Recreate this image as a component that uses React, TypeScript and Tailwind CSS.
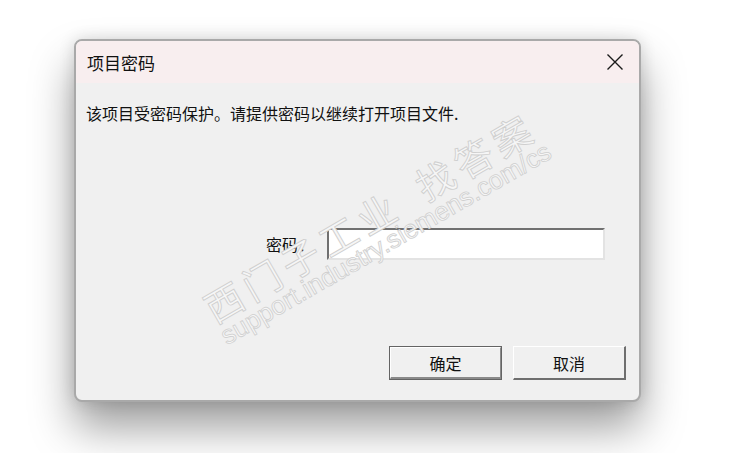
import React from "react";

const cjk = { fontFamily: '"Noto Sans CJK SC", "Noto Sans", sans-serif' };

export default function App() {
  return (
    <div className="w-[753px] h-[453px] bg-white overflow-hidden pl-[74px] pt-[39px]" style={cjk}>
      <div className="relative w-[567px] h-[363px] rounded-[8px] border-2 border-[#a9a9a9] bg-[#f0f0f0] shadow-[0_26px_44px_rgba(0,0,0,0.38),0_0_16px_rgba(0,0,0,0.14)] flex flex-col overflow-hidden">
        {/* title bar */}
        <div className="h-[42px] bg-[#f8eeef] flex items-center justify-between pl-[11px] pr-[15px] shrink-0">
          <span className="text-[17px] leading-none text-[#111]">项目密码</span>
          <svg width="18" height="18" viewBox="0 0 18 18" fill="none">
            <path d="M1.5 1.5 L16.5 16.5 M16.5 1.5 L1.5 16.5" stroke="#1a1a1a" strokeWidth="1.4" />
          </svg>
        </div>
        {/* body */}
        <div className="flex flex-col flex-1">
          <div className="pt-[20px] pl-[10px] text-[16px] leading-[20px] text-[#111]">
            该项目受密码保护。请提供密码以继续打开项目文件.
          </div>
          <div className="flex items-center mt-[105px] pl-[190px]">
            <span className="text-[16px] leading-[20px] text-[#111] w-[61px]">密码：</span>
            <div className="w-[278px] h-[32px] bg-white border-t-2 border-l-2 border-t-[#707070] border-l-[#707070] border-b-2 border-r-2 border-b-[#e3e3e3] border-r-[#e3e3e3]" />
          </div>
          <div className="flex justify-end gap-[11px] mt-[86px] pr-[13px]">
            <div className="w-[113px] h-[34px] border border-[#646464] flex">
              <div className="flex-1 border-t border-l border-t-white border-l-white border-b-2 border-r border-b-[#8a8a8a] border-r-[#8a8a8a] bg-[#f0f0f0] flex items-center justify-center text-[16px] text-[#111]">
                确定
              </div>
            </div>
            <div className="w-[113px] h-[34px] border-t border-l border-t-white border-l-white border-b-2 border-r-2 border-b-[#6e6e6e] border-r-[#6e6e6e] bg-[#f0f0f0] flex items-center justify-center text-[16px] text-[#111]">
              取消
            </div>
          </div>
        </div>
        {/* watermark */}
        <div className="absolute left-[122px] top-[254px] origin-top-left -rotate-30 pointer-events-none whitespace-nowrap">
          <div
            className="text-[38px] leading-[36px] tracking-[6px] text-[#f6f6f6] [-webkit-text-stroke:0.9px_#cfcfcf]"
            style={cjk}
          >
            西门子工业<span className="inline-block w-[24px]" />找答案
          </div>
          <div
            className="text-[26px] leading-[26px] text-[#f6f6f6] [-webkit-text-stroke:0.8px_#cfcfcf]"
            style={{ fontFamily: '"Liberation Sans", Arial, sans-serif' }}
          >
            support.industry.siemens.com/cs
          </div>
        </div>
      </div>
    </div>
  );
}
